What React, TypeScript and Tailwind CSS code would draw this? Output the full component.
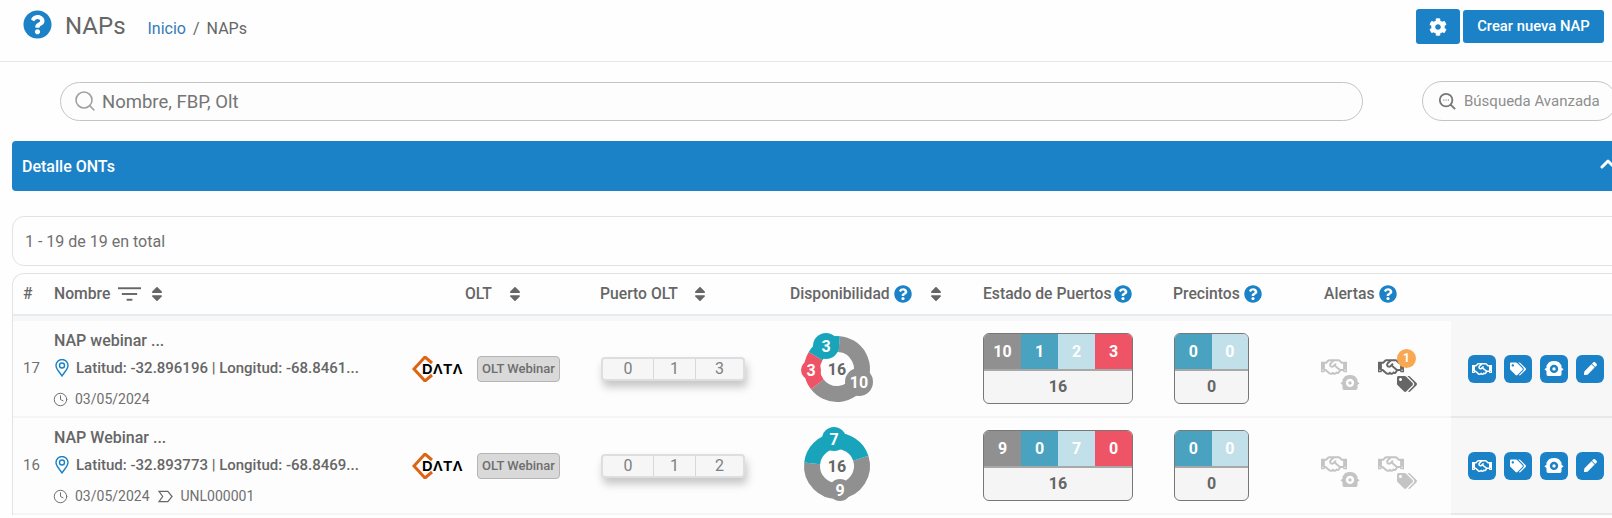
import { ChevronUp, Clock, Search } from 'lucide-react';
import { FaCog, FaPen, FaQuestionCircle, FaRegHandshake, FaSort, FaTags } from 'react-icons/fa';

const columns = 'grid grid-cols-[41px_347px_190px_190px_195px_190px_135px_150px_162px]';

const naps = [
  {
    id: 17,
    name: 'NAP webinar ...',
    coords: 'Latitud: -32.896196 | Longitud: -68.8461...',
    date: '03/05/2024',
    seal: '',
    port: [0, 1, 3],
    ports: [10, 1, 2, 3],
    alert: 1,
    donut: {
      arcs: [
        { from: 5, to: 232, color: '#909090' },
        { from: 232, to: 301, color: '#ef5366' },
        { from: 301, to: 365, color: '#18a5bb' },
      ],
      blobs: [
        { x: -11, y: -23, r: 13, color: '#18a5bb', label: '3' },
        { x: 22, y: 13, r: 14, color: '#909090', label: '10' },
        { x: -26, y: 1, r: 10, color: '#ef5366', label: '3' },
      ],
    },
  },
  {
    id: 16,
    name: 'NAP Webinar ...',
    coords: 'Latitud: -32.893773 | Longitud: -68.8469...',
    date: '03/05/2024',
    seal: 'UNL000001',
    port: [0, 1, 2],
    ports: [9, 0, 7, 0],
    alert: 0,
    donut: {
      arcs: [
        { from: 72, to: 276, color: '#909090' },
        { from: 276, to: 432, color: '#18a5bb' },
      ],
      blobs: [
        { x: -3, y: -27, r: 12, color: '#18a5bb', label: '7' },
        { x: 3, y: 24, r: 11, color: '#909090', label: '9' },
      ],
    },
  },
];

const portWidths = ['w-[50px]', 'w-[42px]', 'flex-1'];

function arcPath(cx: number, cy: number, r: number, from: number, to: number) {
  const point = (deg: number) => {
    const rad = ((deg - 90) * Math.PI) / 180;
    return `${cx + r * Math.cos(rad)} ${cy + r * Math.sin(rad)}`;
  };
  return `M ${point(from)} A ${r} ${r} 0 ${to - from > 180 ? 1 : 0} 1 ${point(to)}`;
}

function Help() {
  return <FaQuestionCircle className="text-[18px] text-[#1c82c7] shrink-0" />;
}

function Sort({ className }: { className: string }) {
  return <FaSort className={`text-[18px] text-[#666] ${className}`} />;
}

function OntIcon({ className, hole }: { className: string; hole: string }) {
  return (
    <svg viewBox="0 0 24 20" className={className}>
      <path
        d="M6 2.500Q12-.5 18 2.500l3 4V9l2.500 2-2.500 2v4a2 2 0 0 1-2 2H5a2 2 0 0 1-2-2v-4L.5 11 3 9V6.500z"
        fill="currentColor"
      />
      <circle cx="12" cy="10.500" r="5" fill={hole} />
      <circle cx="12" cy="10.500" r="2" fill="currentColor" />
    </svg>
  );
}

function MarkerIcon() {
  return (
    <svg viewBox="0 0 14 18" className="w-[14px] h-[18px] shrink-0" fill="none" stroke="#1c82c7" strokeWidth="1.4">
      <path d="M7 17C4.500 13 1 10 1 6.500a6 6 0 0 1 12 0C13 10 9.500 13 7 17z" />
      <circle cx="7" cy="6.500" r="2.500" />
    </svg>
  );
}

function SealIcon() {
  return (
    <svg viewBox="0 0 16 13" className="w-[15px] h-[13px] shrink-0" fill="none" stroke="#666" strokeWidth="1.3">
      <path d="M1 1h9.500L15 6.500 10.500 12H1l4-5.500z" />
    </svg>
  );
}

function Logo() {
  return (
    <div className="w-[56px] h-[26px] relative">
      <svg viewBox="0 0 26 26" className="absolute left-0 top-0 w-[26px] h-[26px]" fill="none" stroke="#dd6413" strokeWidth="3">
        <path d="M20 7l-7-6L2 13l11 12 7-6" />
      </svg>
      <span className="absolute left-[10px] top-0 font-['Liberation_Sans'] font-bold text-[14.500px] leading-[26px] tracking-[0.6px] text-black">
        DΛTΛ
      </span>
    </div>
  );
}

function Donut({ donut }: { donut: (typeof naps)[number]['donut'] }) {
  return (
    <svg viewBox="0 0 90 90" className="w-[90px] h-[90px]">
      {donut.arcs.map((arc) => (
        <path key={arc.from} d={arcPath(45, 45, 25, arc.from, arc.to)} fill="none" stroke={arc.color} strokeWidth="16" />
      ))}
      {donut.blobs.map((blob) => (
        <g key={blob.x}>
          <circle cx={45 + blob.x} cy={45 + blob.y} r={blob.r} fill={blob.color} />
          <text x={45 + blob.x} y={45 + blob.y + 6} textAnchor="middle" fontSize="16" fontWeight="700" fill="#fff">
            {blob.label}
          </text>
        </g>
      ))}
      <text x="45" y="51" textAnchor="middle" fontSize="16" fontWeight="700" fill="#666">
        16
      </text>
    </svg>
  );
}

function PortTable({ values, colors, total, width }: { values: number[]; colors: string[]; total: number; width: string }) {
  return (
    <div className={`${width} h-[71px] flex flex-col border border-[#777] rounded-[6px] overflow-hidden bg-[#f5f5f5]`}>
      <div className="flex h-[35px] border-b-2 border-[#a8a8a8] box-content">
        {values.map((value, i) => (
          <div key={i} className={`flex-1 flex items-center justify-center text-[16px] font-bold text-white ${colors[i]}`}>
            {value}
          </div>
        ))}
      </div>
      <div className="flex-1 flex items-center justify-center text-[16px] font-bold text-[#666]">{total}</div>
    </div>
  );
}

function ActionButton({ children }: { children: React.ReactNode }) {
  return (
    <button className="w-[28px] h-[28px] rounded-[6px] bg-[#1c82c7] text-white flex items-center justify-center">
      {children}
    </button>
  );
}

export default function App() {
  return (
    <div className="w-[1612px] h-[518px] overflow-hidden bg-[#fefefe] font-['Roboto',sans-serif] text-[#666]">
      {/* Header */}
      <div className="h-[62px] border-b border-[#e8e8e8] flex items-start">
        <FaQuestionCircle className="ml-[23px] mt-[10px] text-[29px] text-[#1c82c7]" />
        <h1 className="ml-[13px] mt-[11px] text-[24px] leading-[30px] text-[#666]">NAPs</h1>
        <div className="ml-[22px] mt-[18px] text-[16px] leading-[22px]">
          <span className="text-[#337ab7]">Inicio</span>
          <span className="mx-[7px]">/</span>
          <span>NAPs</span>
        </div>
        <div className="ml-auto mr-[8px] mt-[9px] flex items-start gap-[3px]">
          <button className="w-[44px] h-[35px] rounded-[3px] bg-[#1c82c7] text-white flex items-center justify-center">
            <FaCog className="text-[18px]" />
          </button>
          <button className="w-[141px] h-[33px] mt-px rounded-[3px] bg-[#1c82c7] text-white text-[14.800px] font-medium">
            Crear nueva NAP
          </button>
        </div>
      </div>

      {/* Search */}
      <div className="flex items-center h-[40px] mt-[19px] pl-[60px] w-[1620px]">
        <div className="w-[1303px] h-[39px] rounded-full border border-[#c4c4c4] bg-[#fdfdfd] flex items-center pl-[12px] gap-[5px]">
          <Search className="w-[24px] h-[24px] text-[#a0a0a0]" strokeWidth={1.6} />
          <span className="text-[18.500px] text-[#757575] mt-[3px]">Nombre, FBP, Olt</span>
        </div>
        <div className="ml-[59px] w-[195px] h-[40px] rounded-full border border-[#c4c4c4] bg-[#fdfdfd] flex items-center pl-[15px] gap-[8px]">
          <svg viewBox="0 0 20 20" className="w-[18px] h-[18px]" fill="none" stroke="#777" strokeWidth="2">
            <circle cx="9" cy="9" r="7" />
            <path d="M14 14l5 5" />
            <path d="M6 9h1M8.500 9h1M11 9h1" strokeWidth="1.200" />
          </svg>
          <span className="text-[15px] text-[#8e8e8e]">Búsqueda Avanzada</span>
        </div>
      </div>

      {/* Detalle ONTs */}
      <div className="ml-[12px] mt-[20px] w-[1610px] h-[50px] rounded-l-[4px] bg-[#1c82c7] flex items-center justify-between pl-[10px] text-white">
        <span className="text-[16px] font-medium mt-[2px]">Detalle ONTs</span>
        <ChevronUp className="w-[24px] h-[24px] mr-[2px] mb-[5px]" strokeWidth={3} />
      </div>

      {/* Count */}
      <div className="ml-[12px] mt-[25px] w-[1610px] h-[50px] rounded-l-[12px] border border-[#e3e3e3] flex items-center pl-[12px] pt-[2px] text-[16px] text-[#707070]">
        1 - 19 de 19 en total
      </div>

      {/* Table */}
      <div className="ml-[12px] mt-[7px] w-[1610px] rounded-tl-[12px] border-l border-t border-[#e3e3e3]">
        <div className={`${columns} h-[40px] items-center text-[15.700px] font-medium text-[#666]`}>
          <div className="pl-[10px]">#</div>
          <div className="flex items-center">
            <span>Nombre</span>
            <svg viewBox="0 0 24 14" className="w-[23px] h-[14px] ml-[8px]" fill="#666">
              <rect x="0" y="0" width="24" height="2" />
              <rect x="4" y="6" width="16" height="2" />
              <rect x="9" y="12" width="6" height="2" />
            </svg>
            <Sort className="ml-[7px]" />
          </div>
          <div className="flex items-center pl-[64px]">
            <span>OLT</span>
            <Sort className="ml-[14px]" />
          </div>
          <div className="flex items-center pl-[9px]">
            <span>Puerto OLT</span>
            <Sort className="ml-[13px]" />
          </div>
          <div className="flex items-center pl-[9px]">
            <span>Disponibilidad</span>
            <span className="ml-[4px]"><Help /></span>
            <Sort className="ml-[15px]" />
          </div>
          <div className="flex items-center pl-[7px]">
            <span>Estado de Puertos</span>
            <span className="ml-[3px]"><Help /></span>
          </div>
          <div className="flex items-center pl-[7px]">
            <span>Precintos</span>
            <span className="ml-[4px]"><Help /></span>
          </div>
          <div className="flex items-center pl-[23px]">
            <span>Alertas</span>
            <span className="ml-[4px]"><Help /></span>
          </div>
          <div />
        </div>
        <div className="h-[2px] bg-[#e6ebf0]" />
        <div className="h-[5px] bg-[#f7f7f7]" />

        {naps.map((nap) => (
          <div key={nap.id} className={`${columns} h-[97px] border-b-2 border-[#f5f5f5] bg-[#fdfdfd]`}>
            <div className="pl-[10px] flex items-center text-[15px] text-[#707070]">{nap.id}</div>
            <div className="flex flex-col pt-[10px]">
              <div className="h-[20px] text-[16px] leading-[20px] font-medium">{nap.name}</div>
              <div className="mt-[7px] h-[20px] flex items-center text-[15px] font-medium">
                <span className="ml-px mr-[7px]"><MarkerIcon /></span>
                {nap.coords}
              </div>
              <div className="mt-[11px] h-[20px] flex items-center text-[14px] text-[#707070]">
                <Clock className="w-[15px] h-[15px] mr-[7px] ml-[-1px]" strokeWidth={1.6} />
                <span>{nap.date}</span>
                {nap.seal && (
                  <>
                    <span className="ml-[8px] mr-[8px]"><SealIcon /></span>
                    <span>{nap.seal}</span>
                  </>
                )}
              </div>
            </div>
            <div className="flex items-center pl-[11px] gap-[9px]">
              <Logo />
              <div className="w-[83px] h-[26px] rounded-[4px] border border-[#b5b5b5] bg-[#d9d9d9] flex items-center justify-center text-[13px] font-medium text-[#6e6e6e]">
                OLT Webinar
              </div>
            </div>
            <div className="flex items-center pl-[10px]">
              <div className="w-[144px] h-[24px] flex rounded-[4px] border-2 border-[#dedede] bg-[#f6f6f6] shadow-[2px_6px_8px_rgba(0,0,0,0.22)] text-[16px] text-[#808080]">
                {nap.port.map((p, i) => (
                  <div key={i} className={`${portWidths[i]} flex items-center justify-center ${i > 0 ? 'border-l border-[#d8d8d8]' : ''}`}>
                    {p}
                  </div>
                ))}
              </div>
            </div>
            <div className="flex items-center pl-[11px]">
              <Donut donut={nap.donut} />
            </div>
            <div className="flex items-center pl-[7px]">
              <PortTable
                width="w-[150px]"
                values={nap.ports}
                total={16}
                colors={['bg-[#909090]', 'bg-[#49a2bf]', 'bg-[#c2e0e9]', 'bg-[#ef5366]']}
              />
            </div>
            <div className="flex items-center pl-[8px]">
              <PortTable width="w-[75px]" values={[0, 0]} total={0} colors={['bg-[#49a2bf]', 'bg-[#c2e0e9]']} />
            </div>
            <div className="flex items-center pl-[20px] gap-[19px]">
              <div className="relative w-[38px] h-[32px] text-[#c4c4c4]">
                <FaRegHandshake className="text-[26px] absolute left-0 top-[1px]" />
                <OntIcon className="absolute left-[19px] top-[21px] w-[20px] h-[17px]" hole="#fdfdfd" />
              </div>
              <div className={`relative w-[38px] h-[32px] ${nap.alert ? 'text-[#666]' : 'text-[#c4c4c4]'}`}>
                <FaRegHandshake className="text-[26px] absolute left-0 top-[1px]" />
                <FaTags className="text-[20px] absolute left-[19px] top-[21px]" />
                {nap.alert > 0 && (
                  <span className="absolute left-[19px] top-[-4px] w-[19px] h-[19px] rounded-full bg-[#f9a852] text-white text-[12px] font-bold flex items-center justify-center">
                    {nap.alert}
                  </span>
                )}
              </div>
            </div>
            <div className="bg-[#f7f7f7] flex items-center pl-[17px] gap-[8px] mb-[-2px] border-b-2 border-[#e8e8e8]">
              <ActionButton><FaRegHandshake className="text-[20px]" /></ActionButton>
              <ActionButton><FaTags className="text-[16px]" /></ActionButton>
              <ActionButton><OntIcon className="w-[20px] h-[17px]" hole="#1c82c7" /></ActionButton>
              <ActionButton><FaPen className="text-[13px]" /></ActionButton>
            </div>
          </div>
        ))}
      </div>
    </div>
  );
}
